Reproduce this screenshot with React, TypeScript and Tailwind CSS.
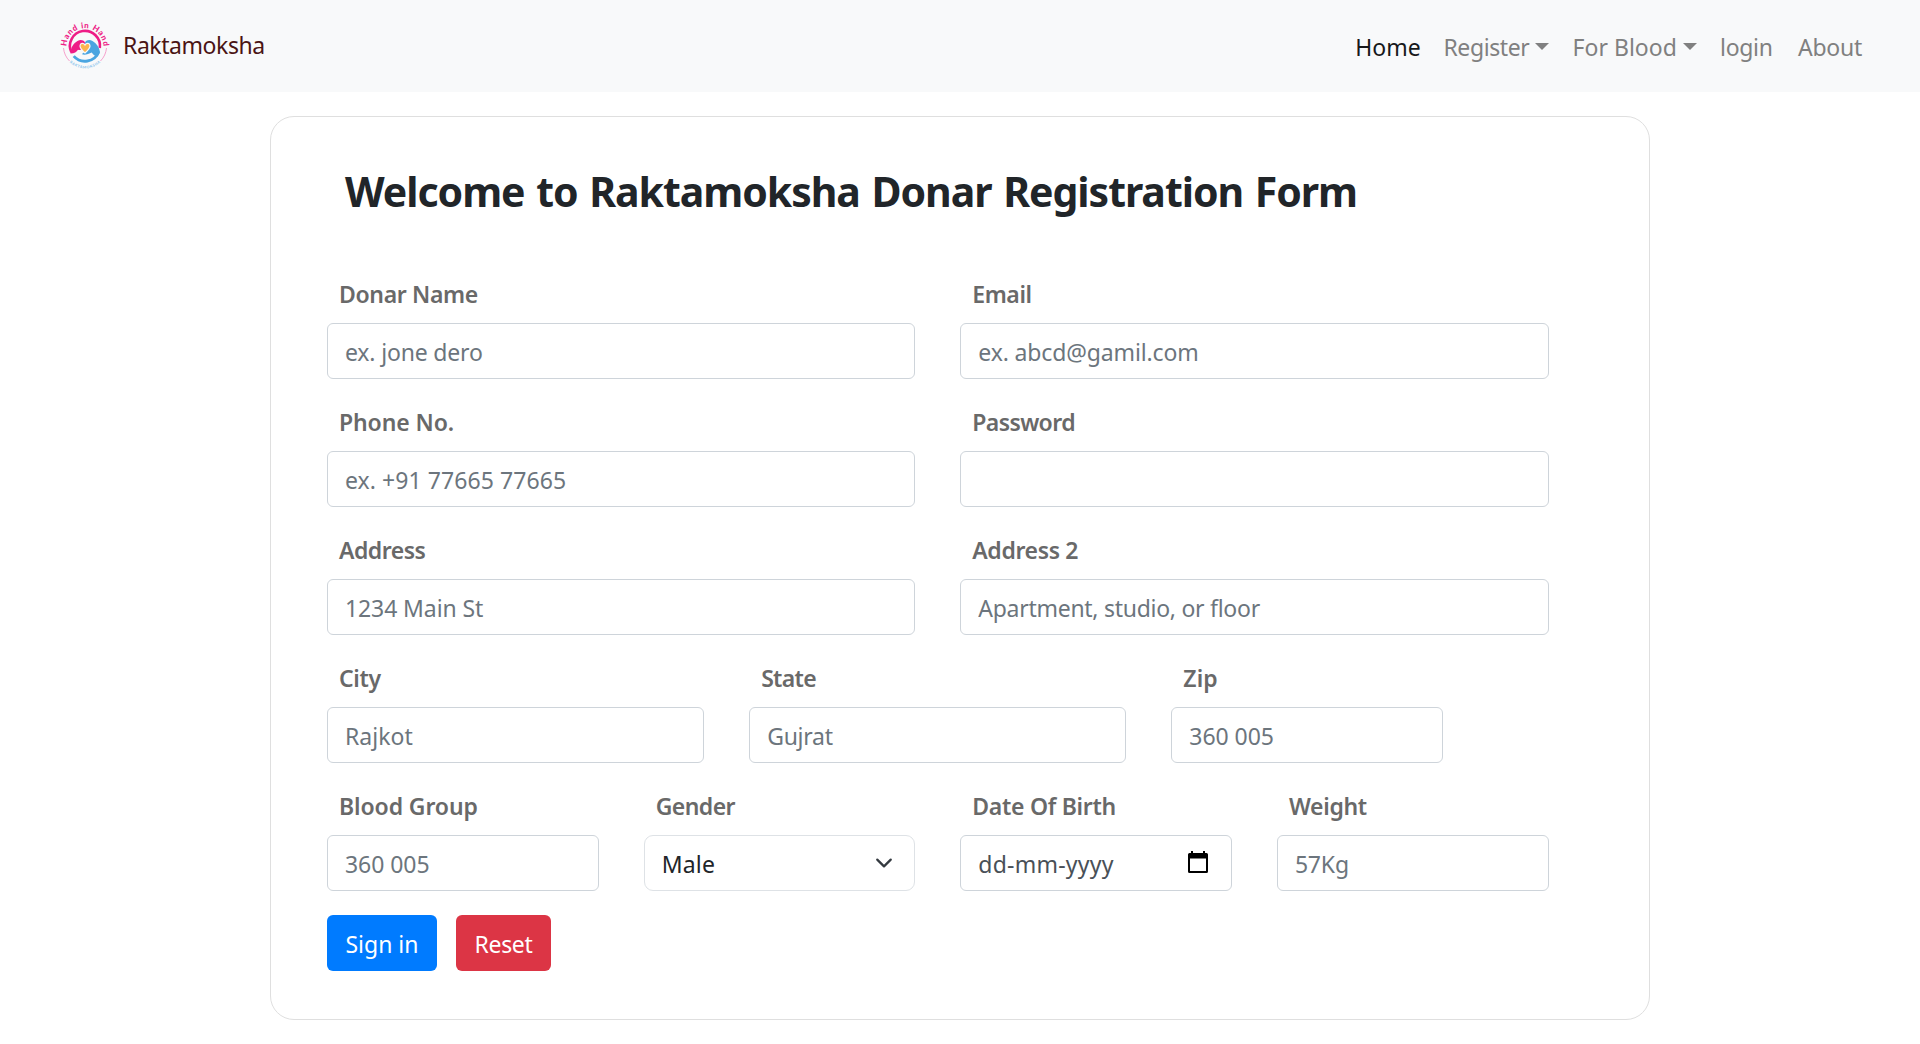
import type { ReactNode } from 'react'

type FieldProps = { label: string; labelClass: string; className: string; children: ReactNode }

function Field({ label, labelClass, className, children }: FieldProps) {
  return (
    <div className={className}>
      <label className={`block h-[46px] pl-3 text-[23px] leading-[34px] font-semibold text-[#696969] ${labelClass}`}>
        {label}
      </label>
      {children}
    </div>
  )
}

const control =
  'block h-14 w-full rounded-[6px] border border-[#ced4da] bg-white pl-[17px] pr-4 pt-[2px] text-[23px] text-[#495057] outline-none placeholder:text-[#6c757d] placeholder:opacity-100'

function Logo() {
  return (
    <svg className="overflow-visible" width="52" height="52" viewBox="-26 -26 52 52" aria-label="Hand in Hand">
      <defs>
        <path id="top-arc" d="M-18.4 0.5A18.4 18.4 0 0 1 18.4 0.5" />
        <path id="bottom-arc" d="M-22 5A22.6 22.6 0 0 0 22 5" />
      </defs>
      <text fontFamily="Lato, sans-serif" fontWeight="900" fontSize="8" fill="#ee1c86" textAnchor="middle">
        <textPath href="#top-arc" startOffset="50%" textLength="57">Hand in Hand</textPath>
      </text>
      <text fontFamily="Lato, sans-serif" fontWeight="700" fontSize="3.6" fill="#7fbdea" textAnchor="middle">
        <textPath href="#bottom-arc" startOffset="50%" textLength="34">RAKTAMOKSHA</textPath>
      </text>
      <path d="M-21.5 2A21.6 21.6 0 0 0 -15.5 15M21.5 2A21.6 21.6 0 0 1 15.5 15" fill="none" stroke="#f48abf" strokeWidth="0.8" />
      <path d="M-13.6 6.3A15 15 0 1 1 14.8 2" fill="none" stroke="#ee1c86" strokeWidth="2.6" />
      <path d="M-11.3 10.1A15 15 0 0 0 13.8 6" fill="none" stroke="#4aa5e0" strokeWidth="2.8" />
      <path d="M-14.5 7.5C-14.2 1-11.5-2.5-7.5-5C-4.5-6.6-1.6-6 0-3.6L0 3C-2 3.4-4.5 4.4-7 3.8C-8.4 6-10.8 7.6-14.5 7.5Z" fill="#ee1c86" />
      <path d="M15 6C14.2 1 11.5-2.5 7.5-5C4.5-6.6 1.6-6 0-3.6V6C-1.4 6.8-2.8 7.4-3 8.2C-.6 9.4 3.6 8 6.8 6.4C8 8.5 10 10 12.5 10.4Z" fill="#4aa5e0" />
      <path d="M0 7C-3.4 4-5 2.2-5 0C-5-3-1.5-3.5 0-1C1.5-3.5 5-3 5 0C5 2.2 3.4 4 0 7Z" fill="#fdb44e" stroke="#f8f9fa" strokeWidth="1.2" />
    </svg>
  )
}

function Caret({ className }: { className: string }) {
  return (
    <svg className={className} width="14" height="7" viewBox="0 0 14 7">
      <path d="M0 0H14L7 7Z" fill="#808080" />
    </svg>
  )
}

export default function App() {
  return (
    <div className="h-[1044px] w-full overflow-hidden bg-white font-['Noto_Sans',sans-serif] text-[#212529]">
      <nav className="flex h-[92px] items-start justify-between bg-[#f8f9fa] pl-[59px] pr-[57px]">
        <a className="flex items-start pt-[20px]">
          <Logo />
          <span className="ml-[12px] pt-[9px] text-[23px] leading-[32px] tracking-[-0.43px] text-[#4a1414]">Raktamoksha</span>
        </a>
        <div className="flex pt-[31px] text-[23px] leading-[32px] text-[#808080]">
          <a className="w-[88.2px] text-[#17181a]">Home</a>
          <a className="flex w-[129.2px] tracking-[-0.39px]">Register<Caret className="ml-[6px] mt-[12px]" /></a>
          <a className="flex w-[147.4px]">For Blood<Caret className="ml-[6px] mt-[12px]" /></a>
          <a className="w-[78px] tracking-[-0.3px]">login</a>
          <a className="w-[65px] tracking-[-0.24px]">About</a>
        </div>
      </nav>

      <main className="mx-auto mt-6 h-[904px] w-[1380px] rounded-[24px] border border-[#dfdfdf] bg-white pl-14 pt-[49px]">
        <h1 className="h-[111px] pl-[18px] text-[41px] leading-[50px] font-bold tracking-[-1.03px] [word-spacing:2px] whitespace-nowrap">
          Welcome to Raktamoksha Donar Registration Form
        </h1>

        <form className="flex w-[1221.5px] flex-col gap-[26px]">
          <div className="grid grid-cols-12 gap-x-[45px]">
            <Field className="col-span-6" label="Donar Name" labelClass="tracking-[-0.35px]">
              <input className={`${control} tracking-[-0.17px]`} placeholder="ex. jone dero" />
            </Field>
            <Field className="col-span-6" label="Email" labelClass="tracking-[-0.4px]">
              <input className={`${control} tracking-[-0.13px]`} placeholder="ex. abcd@gamil.com" />
            </Field>
          </div>

          <div className="grid grid-cols-12 gap-x-[45px]">
            <Field className="col-span-6" label="Phone No." labelClass="tracking-[-0.1px]">
              <input className={`${control} tracking-[0.07px]`} placeholder="ex. +91 77665 77665" />
            </Field>
            <Field className="col-span-6" label="Password" labelClass="tracking-[-0.6px]">
              <input className={control} type="password" />
            </Field>
          </div>

          <div className="grid grid-cols-12 gap-x-[45px]">
            <Field className="col-span-6" label="Address" labelClass="tracking-[-0.5px]">
              <input className={`${control} tracking-[-0.1px]`} placeholder="1234 Main St" />
            </Field>
            <Field className="col-span-6" label="Address 2" labelClass="tracking-[-0.36px]">
              <input className={`${control} tracking-[-0.27px]`} placeholder="Apartment, studio, or floor" />
            </Field>
          </div>

          <div className="grid grid-cols-12 gap-x-[45px]">
            <Field className="col-span-4" label="City" labelClass="tracking-[-0.34px]">
              <input className={`${control} tracking-[0.05px]`} placeholder="Rajkot" />
            </Field>
            <Field className="col-span-4" label="State" labelClass="tracking-[-0.7px]">
              <input className={`${control} tracking-[-0.27px]`} placeholder="Gujrat" />
            </Field>
            <Field className="col-span-3" label="Zip" labelClass="tracking-[0.07px]">
              <input className={`${control} tracking-[-0.05px]`} placeholder="360 005" />
            </Field>
          </div>

          <div className="grid grid-cols-12 gap-x-[45px]">
            <Field className="col-span-3" label="Blood Group" labelClass="tracking-[-0.1px]">
              <input className={`${control} tracking-[-0.05px]`} placeholder="360 005" />
            </Field>
            <Field className="col-span-3" label="Gender" labelClass="tracking-[-0.54px]">
              <div className="flex h-14 items-center justify-between rounded-[9px] border border-[#dee2e6] pl-[17px] pr-[21px] text-[23px] tracking-[0.2px] text-[#212529]">
                <span className="pt-[2px]">Male</span>
                <svg width="18" height="18" viewBox="0 0 16 16" fill="none" stroke="#343a40" strokeWidth="2" strokeLinecap="round" strokeLinejoin="round">
                  <path d="m2 5 6 6 6-6" />
                </svg>
              </div>
            </Field>
            <Field className="col-span-3" label="Date Of Birth" labelClass="tracking-[-0.28px]">
              <div className="flex h-14 items-center justify-between rounded-[6px] border border-[#ced4da] pl-[17px] pr-[23px] text-[23px] tracking-[0.24px] text-[#495057]">
                <span className="pt-[2px]">dd-mm-yyyy</span>
                <svg className="-mt-[2px]" width="20" height="22" viewBox="0 0 20 22">
                  <path fillRule="evenodd" d="M3 0h2v2h10V0h2v2h1.5Q20 2 20 3.5V20.5Q20 22 18.5 22H1.5Q0 22 0 20.5V3.5Q0 2 1.5 2H3ZM2 7.5V20H18V7.5Z" fill="#000" />
                </svg>
              </div>
            </Field>
            <Field className="col-span-3" label="Weight" labelClass="tracking-[-0.3px]">
              <input className={`${control} tracking-[-0.18px]`} placeholder="57Kg" />
            </Field>
          </div>

          <div className="-mt-[2px] flex gap-[19px]">
            <button type="button" className="h-14 w-[110px] rounded-[6px] bg-[#007bff] pt-[2px] text-[23px] text-white">Sign in</button>
            <button type="button" className="h-14 w-[95px] rounded-[6px] bg-[#dc3545] pt-[2px] text-[23px] tracking-[-0.32px] text-white">Reset</button>
          </div>
        </form>
      </main>
    </div>
  )
}
